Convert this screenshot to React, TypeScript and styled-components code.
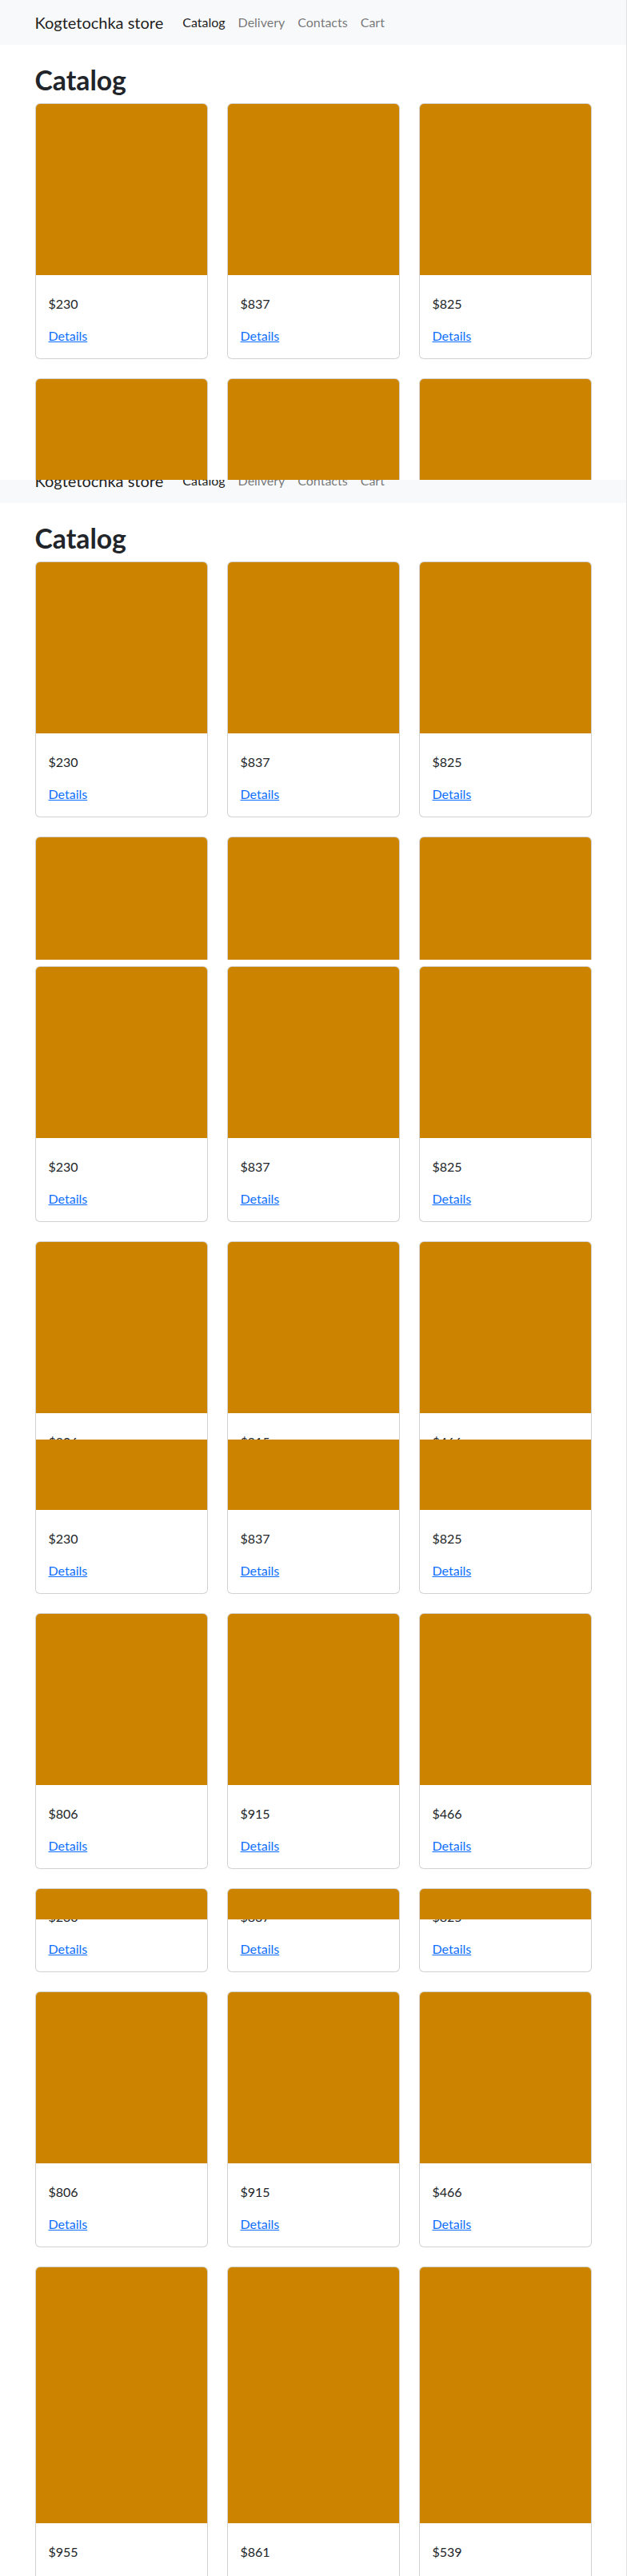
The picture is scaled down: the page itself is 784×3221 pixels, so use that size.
import React from "react";
import styled, { createGlobalStyle } from "styled-components";

const GlobalStyle = createGlobalStyle`
  html, body {
    margin: 0;
    padding: 0;
    background: #ffffff;
  }
  body {
    font-family: Lato, "Open Sans", "Noto Sans", sans-serif;
    font-size: 16px;
    line-height: 1.5;
    color: #212529;
  }
  * { box-sizing: border-box; }
`;

const Frame = styled.div`
  width: 784px;
  border-right: 1px solid #e3e3e3;
  display: flex;
  flex-direction: column;
`;

const Strip = styled.section<{ $h: number }>`
  height: ${(p) => p.$h}px;
  overflow: hidden;
  flex: none;
`;

const Shift = styled.div<{ $offset: number }>`
  margin-top: ${(p) => -p.$offset}px;
`;

const Navbar = styled.nav`
  background: #f8f9fa;
  height: 56px;
  padding: 8px 0;
`;

const Container = styled.div`
  width: 720px;
  margin: 0 auto;
  padding: 0 12px;
`;

const NavInner = styled(Container)`
  display: flex;
  align-items: center;
  height: 40px;
`;

const Brand = styled.a`
  font-size: 20px;
  line-height: 30px;
  padding: 5px 0;
  margin-right: 16px;
  color: rgba(0, 0, 0, 0.9);
  text-decoration: none;
  white-space: nowrap;
`;

const NavList = styled.div`
  display: flex;
  align-items: center;
`;

const NavLink = styled.a<{ $active?: boolean }>`
  padding: 8px;
  font-size: 16px;
  line-height: 24px;
  color: ${(p) => (p.$active ? "rgba(0, 0, 0, 0.9)" : "rgba(0, 0, 0, 0.55)")};
  text-decoration: none;
`;

const Main = styled(Container)`
  padding-top: 24px;
`;

const Title = styled.h1`
  margin: 0 0 8px;
  font-size: 33.76px;
  line-height: 1.2;
  font-weight: 700;
  color: #212529;
`;

const Grid = styled.div`
  display: grid;
  grid-template-columns: repeat(3, 1fr);
  gap: 24px;
`;

const Card = styled.div`
  border: 1px solid rgba(0, 0, 0, 0.175);
  border-radius: 6px;
  overflow: hidden;
  background: #fff;
  display: flex;
  flex-direction: column;
`;

const CardImage = styled.div`
  aspect-ratio: 1 / 1;
  width: 100%;
  background: #cc8400;
`;

const CardBody = styled.div`
  padding: 24px 16px 16px;
`;

const Price = styled.p`
  margin: 0 0 16px;
  line-height: 24px;
`;

const DetailsLink = styled.a`
  color: #0d6efd;
  text-decoration: underline;
  line-height: 24px;
`;

const products = [230, 837, 825, 806, 915, 466, 955, 861, 539];

const Page = () => (
  <>
    <Navbar>
      <NavInner>
        <Brand href="#">Kogtetochka store</Brand>
        <NavList>
          <NavLink $active href="#">Catalog</NavLink>
          <NavLink href="#">Delivery</NavLink>
          <NavLink href="#">Contacts</NavLink>
          <NavLink href="#">Cart</NavLink>
        </NavList>
      </NavInner>
    </Navbar>
    <Main>
      <Title>Catalog</Title>
      <Grid>
        {products.map((price, i) => (
          <Card key={i}>
            <CardImage />
            <CardBody>
              <Price>${price}</Price>
              <DetailsLink href="#">Details</DetailsLink>
            </CardBody>
          </Card>
        ))}
      </Grid>
    </Main>
  </>
);

const strips = [
  { h: 600, offset: 0 },
  { h: 600, offset: 27 },
  { h: 600, offset: 121 },
  { h: 600, offset: 256 },
  { h: 600, offset: 383 },
  { h: 221, offset: 877 },
];

export default function App() {
  return (
    <>
      <GlobalStyle />
      <Frame>
        {strips.map((s, i) => (
          <Strip key={i} $h={s.h}>
            <Shift $offset={s.offset}>
              <Page />
            </Shift>
          </Strip>
        ))}
      </Frame>
    </>
  );
}
